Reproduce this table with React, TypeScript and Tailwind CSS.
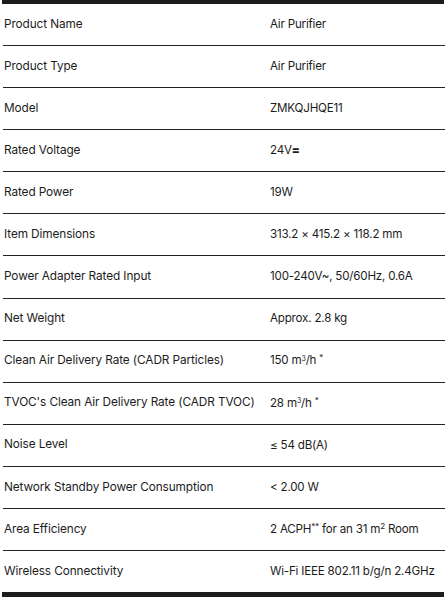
type Row = {
  label: string;
  value: React.ReactNode;
};

const rows: Row[] = [
  { label: 'Product Name', value: 'Air Purifier' },
  { label: 'Product Type', value: 'Air Purifier' },
  { label: 'Model', value: 'ZMKQJHQE11' },
  {
    label: 'Rated Voltage',
    value: (
      <>
        24V<span className="font-black">=</span>
      </>
    ),
  },
  { label: 'Rated Power', value: '19W' },
  { label: 'Item Dimensions', value: '313.2 × 415.2 × 118.2 mm' },
  { label: 'Power Adapter Rated Input', value: '100-240V~, 50/60Hz, 0.6A' },
  { label: 'Net Weight', value: 'Approx. 2.8 kg' },
  {
    label: 'Clean Air Delivery Rate (CADR Particles)',
    value: (
      <>
        150 m<sup className="text-[7px]">3</sup>/h <sup className="text-[8px]">*</sup>
      </>
    ),
  },
  {
    label: "TVOC's Clean Air Delivery Rate (CADR TVOC)",
    value: (
      <>
        28 m<sup className="text-[7px]">3</sup>/h <sup className="text-[8px]">*</sup>
      </>
    ),
  },
  { label: 'Noise Level', value: '≤ 54 dB(A)' },
  { label: 'Network Standby Power Consumption', value: '< 2.00 W' },
  {
    label: 'Area Efficiency',
    value: (
      <>
        2 ACPH<sup className="text-[8px]">**</sup> for an 31 m<sup className="text-[8px]">2</sup> Room
      </>
    ),
  },
  { label: 'Wireless Connectivity', value: 'Wi-Fi IEEE 802.11 b/g/n 2.4GHz' },
];

export default function App() {
  return (
    <div className="w-[446px] h-[597px] bg-white overflow-hidden font-['Inter',sans-serif] text-[#1c1c1c]">
      <div className="h-[4px] mx-[2px] bg-[#1c1c1c]" />
      <div className="flex flex-col h-[588px] ml-[3px] mr-[1px]">
        {rows.map((row, i) => (
          <div
            key={row.label}
            className={
              i < rows.length - 1
                ? 'flex-1 flex items-center border-b border-[#222]'
                : 'flex-1 flex items-center'
            }
          >
            <div className="w-[267px] pl-[1px] text-[11.8px] tracking-[-0.1px]">{row.label}</div>
            <div className="flex-1 text-[11.6px] tracking-[-0.2px]">{row.value}</div>
          </div>
        ))}
      </div>
      <div className="h-[5px] mx-[2px] bg-[#1c1c1c]" />
    </div>
  );
}
